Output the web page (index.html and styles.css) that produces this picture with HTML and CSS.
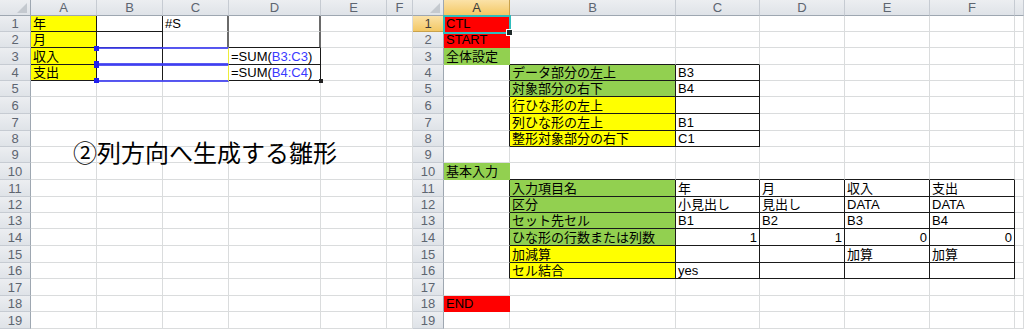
FILE: index.html
```html
<!DOCTYPE html>
<html lang="ja">
<head>
<meta charset="utf-8">
<title>Sheets</title>
<link rel="stylesheet" href="styles.css">
</head>
<body>
<div class="page">
  <div class="sheet left">
    <div class="h corner"></div><div class="h colh">A</div><div class="h colh">B</div><div class="h colh">C</div><div class="h colh">D</div><div class="h colh">E</div><div class="h colh">F</div>

    <div class="h rowh">1</div><div class="c y rb bb">年</div><div class="c rb bb"></div><div class="c rg">#S</div><div class="c rg"></div><div class="c"></div><div class="c"></div>
    <div class="h rowh">2</div><div class="c y rb bb">月</div><div class="c rb bb"></div><div class="c rg"></div><div class="c rg bb"></div><div class="c"></div><div class="c"></div>
    <div class="h rowh">3</div><div class="c y rb bb">収入</div><div class="c rb"></div><div class="c"></div><div class="c rb bb">=SUM(<span class="ref-t">B3:C3</span>)</div><div class="c"></div><div class="c"></div>
    <div class="h rowh">4</div><div class="c y rb bb">支出</div><div class="c rb"></div><div class="c"></div><div class="c rb bb">=SUM(<span class="ref-t">B4:C4</span>)</div><div class="c"></div><div class="c"></div>
    <div class="h rowh">5</div><div class="c"></div><div class="c"></div><div class="c"></div><div class="c"></div><div class="c"></div><div class="c"></div>
    <div class="h rowh">6</div><div class="c"></div><div class="c"></div><div class="c"></div><div class="c"></div><div class="c"></div><div class="c"></div>
    <div class="h rowh">7</div><div class="c"></div><div class="c"></div><div class="c"></div><div class="c"></div><div class="c"></div><div class="c"></div>
    <div class="h rowh">8</div><div class="c"></div><div class="c"></div><div class="c"></div><div class="c"></div><div class="c"></div><div class="c"></div>
    <div class="h rowh">9</div><div class="c"></div><div class="c"></div><div class="c"></div><div class="c"></div><div class="c"></div><div class="c"></div>
    <div class="h rowh">10</div><div class="c"></div><div class="c"></div><div class="c"></div><div class="c"></div><div class="c"></div><div class="c"></div>
    <div class="h rowh">11</div><div class="c"></div><div class="c"></div><div class="c"></div><div class="c"></div><div class="c"></div><div class="c"></div>
    <div class="h rowh">12</div><div class="c"></div><div class="c"></div><div class="c"></div><div class="c"></div><div class="c"></div><div class="c"></div>
    <div class="h rowh">13</div><div class="c"></div><div class="c"></div><div class="c"></div><div class="c"></div><div class="c"></div><div class="c"></div>
    <div class="h rowh">14</div><div class="c"></div><div class="c"></div><div class="c"></div><div class="c"></div><div class="c"></div><div class="c"></div>
    <div class="h rowh">15</div><div class="c"></div><div class="c"></div><div class="c"></div><div class="c"></div><div class="c"></div><div class="c"></div>
    <div class="h rowh">16</div><div class="c"></div><div class="c"></div><div class="c"></div><div class="c"></div><div class="c"></div><div class="c"></div>
    <div class="h rowh">17</div><div class="c"></div><div class="c"></div><div class="c"></div><div class="c"></div><div class="c"></div><div class="c"></div>
    <div class="h rowh">18</div><div class="c"></div><div class="c"></div><div class="c"></div><div class="c"></div><div class="c"></div><div class="c"></div>
    <div class="h rowh">19</div><div class="c"></div><div class="c"></div><div class="c"></div><div class="c"></div><div class="c"></div><div class="c"></div>

    <div class="ref ref1"></div>
    <div class="ref ref2"></div>
    <div class="handle handle-left"></div>
    <div class="title">②列方向へ生成する雛形</div>
  </div>

  <div class="sheet right">
    <div class="h corner"></div><div class="h colh sel">A</div><div class="h colh">B</div><div class="h colh">C</div><div class="h colh">D</div><div class="h colh">E</div><div class="h colh">F</div><div class="h colh"></div>

    <div class="h rowh sel">1</div><div class="c r">CTL</div><div class="c"></div><div class="c"></div><div class="c"></div><div class="c"></div><div class="c"></div><div class="c"></div>
    <div class="h rowh">2</div><div class="c r">START</div><div class="c"></div><div class="c"></div><div class="c"></div><div class="c"></div><div class="c"></div><div class="c"></div>
    <div class="h rowh">3</div><div class="c g">全体設定</div><div class="c bb"></div><div class="c bb"></div><div class="c"></div><div class="c"></div><div class="c"></div><div class="c"></div>
    <div class="h rowh">4</div><div class="c rb"></div><div class="c g rb bb">データ部分の左上</div><div class="c rb bb">B3</div><div class="c"></div><div class="c"></div><div class="c"></div><div class="c"></div>
    <div class="h rowh">5</div><div class="c rb"></div><div class="c g rb bb">対象部分の右下</div><div class="c rb bb">B4</div><div class="c"></div><div class="c"></div><div class="c"></div><div class="c"></div>
    <div class="h rowh">6</div><div class="c rb"></div><div class="c y rb bb">行ひな形の左上</div><div class="c rb bb"></div><div class="c"></div><div class="c"></div><div class="c"></div><div class="c"></div>
    <div class="h rowh">7</div><div class="c rb"></div><div class="c y rb bb">列ひな形の左上</div><div class="c rb bb">B1</div><div class="c"></div><div class="c"></div><div class="c"></div><div class="c"></div>
    <div class="h rowh">8</div><div class="c rb"></div><div class="c y rb bb">整形対象部分の右下</div><div class="c rb bb">C1</div><div class="c"></div><div class="c"></div><div class="c"></div><div class="c"></div>
    <div class="h rowh">9</div><div class="c"></div><div class="c"></div><div class="c"></div><div class="c"></div><div class="c"></div><div class="c"></div><div class="c"></div>
    <div class="h rowh">10</div><div class="c g">基本入力</div><div class="c bb"></div><div class="c bb"></div><div class="c bb"></div><div class="c bb"></div><div class="c bb"></div><div class="c"></div>
    <div class="h rowh">11</div><div class="c rb"></div><div class="c g rb bb">入力項目名</div><div class="c rb bb">年</div><div class="c rb bb">月</div><div class="c rb bb">収入</div><div class="c rb bb">支出</div><div class="c"></div>
    <div class="h rowh">12</div><div class="c rb"></div><div class="c g rb bb">区分</div><div class="c rb bb">小見出し</div><div class="c rb bb">見出し</div><div class="c rb bb">DATA</div><div class="c rb bb">DATA</div><div class="c"></div>
    <div class="h rowh">13</div><div class="c rb"></div><div class="c g rb bb">セット先セル</div><div class="c rb bb">B1</div><div class="c rb bb">B2</div><div class="c rb bb">B3</div><div class="c rb bb">B4</div><div class="c"></div>
    <div class="h rowh">14</div><div class="c rb"></div><div class="c g rb bb">ひな形の行数または列数</div><div class="c rb bb num">1</div><div class="c rb bb num">1</div><div class="c rb bb num">0</div><div class="c rb bb num">0</div><div class="c"></div>
    <div class="h rowh">15</div><div class="c rb"></div><div class="c y rb bb">加減算</div><div class="c rb bb"></div><div class="c rb bb"></div><div class="c rb bb">加算</div><div class="c rb bb">加算</div><div class="c"></div>
    <div class="h rowh">16</div><div class="c rb"></div><div class="c y rb bb">セル結合</div><div class="c rb bb">yes</div><div class="c rb bb"></div><div class="c rb bb"></div><div class="c rb bb"></div><div class="c"></div>
    <div class="h rowh">17</div><div class="c"></div><div class="c"></div><div class="c"></div><div class="c"></div><div class="c"></div><div class="c"></div><div class="c"></div>
    <div class="h rowh">18</div><div class="c r">END</div><div class="c"></div><div class="c"></div><div class="c"></div><div class="c"></div><div class="c"></div><div class="c"></div>
    <div class="h rowh">19</div><div class="c"></div><div class="c"></div><div class="c"></div><div class="c"></div><div class="c"></div><div class="c"></div><div class="c"></div>

    <div class="selection"></div>
  </div>
</div>
</body>
</html>
```

FILE: styles.css
```css
* {
  box-sizing: border-box;
  margin: 0;
  padding: 0;
}

html, body {
  width: 1024px;
  height: 329px;
  overflow: hidden;
  background: #ffffff;
}

body {
  font-family: "Liberation Sans", "Noto Sans CJK JP", sans-serif;
  font-size: 13px;
  color: #000000;
}

.page {
  display: flex;
  width: 1024px;
  height: 329px;
}

.sheet {
  position: relative;
  display: grid;
  grid-template-rows: 16px 16px 16px 17px 16px 16px 17px 17px 16px 16px 17px 17px 16px 16px 17px 17px 16px 17px 16px 17px;
  height: 329px;
  overflow: hidden;
  flex: none;
}

.left {
  width: 413px;
  grid-template-columns: 31px 66px 66px 66px 92px 66px 26px;
}

.right {
  width: 611px;
  grid-template-columns: 31px 66px 166px 84px 85px 85px 85px 9px;
}

/* headers */
.h {
  display: flex;
  align-items: center;
  justify-content: center;
  background: linear-gradient(#eceef1, #dfe3e8);
  color: #5d6570;
  font-size: 13px;
  line-height: 15px;
  border-right: 1px solid #c6cbd2;
  border-bottom: 1px solid #c6cbd2;
}

.colh {
  border-bottom-color: #9ea7b1;
}

.rowh {
  border-right-color: #9ea7b1;
}

.h.sel {
  background: linear-gradient(#fbe2a8, #f3c865);
  color: #3b3b3b;
  border-right-color: #c9a24b;
  border-bottom-color: #c9a24b;
}

.corner {
  position: relative;
  border-right-color: #9ea7b1;
  border-bottom-color: #9ea7b1;
}

.corner::after {
  content: "";
  position: absolute;
  right: 3px;
  bottom: 2px;
  width: 0;
  height: 0;
  border-left: 10px solid transparent;
  border-bottom: 10px solid #c4c9cf;
}

/* cells */
.c {
  display: flex;
  align-items: flex-end;
  padding: 0 1px 0 2px;
  line-height: 15px;
  white-space: nowrap;
  border-right: 1px solid #dadcdd;
  border-bottom: 1px solid #dadcdd;
  overflow: visible;
}

.num {
  justify-content: flex-end;
  padding-right: 2px;
}

.y {
  background: #ffff00;
  border-right-color: #ffff00;
  border-bottom-color: #ffff00;
}

.g {
  background: #92d050;
  border-right-color: #92d050;
  border-bottom-color: #92d050;
}

.r {
  background: #ff0000;
  border-right-color: #ff0000;
  border-bottom-color: #ff0000;
}

.rb {
  border-right-color: #1a1a1a;
}

.bb {
  border-bottom-color: #1a1a1a;
}

.rg {
  border-right: 2px solid #6a6a6a;
}

.ref-t {
  color: #3a3aff;
}

/* overlays */
.ref {
  position: absolute;
  left: 98px;
  width: 131px;
  height: 18px;
  border-top: 2px solid rgba(60, 60, 240, 0.85);
  border-bottom: 2px solid rgba(60, 60, 240, 0.85);
  border-right: 1px solid #eded3a;
}

.ref1 {
  top: 47px;
}

.ref2 {
  top: 64px;
}

.ref::before,
.ref::after {
  content: "";
  position: absolute;
  left: -4px;
  width: 5px;
  height: 5px;
  background: #2020f0;
}

.ref::before {
  top: -3px;
}

.ref::after {
  bottom: -3px;
}

.handle-left {
  position: absolute;
  left: 319px;
  top: 79px;
  width: 4px;
  height: 4px;
  background: #222222;
}

.title {
  position: absolute;
  left: 73px;
  top: 139px;
  font-family: "Noto Sans CJK JP", sans-serif;
  font-size: 24px;
  line-height: 26px;
  color: #000000;
  white-space: nowrap;
}

.selection {
  position: absolute;
  left: 30px;
  top: 15px;
  width: 68px;
  height: 19px;
  border: 2px solid #2fbcbc;
}

.selection::after {
  content: "";
  position: absolute;
  right: -4px;
  bottom: -4px;
  width: 5px;
  height: 5px;
  background: #1f2a2a;
  border: 1px solid #ffffff;
}
```
